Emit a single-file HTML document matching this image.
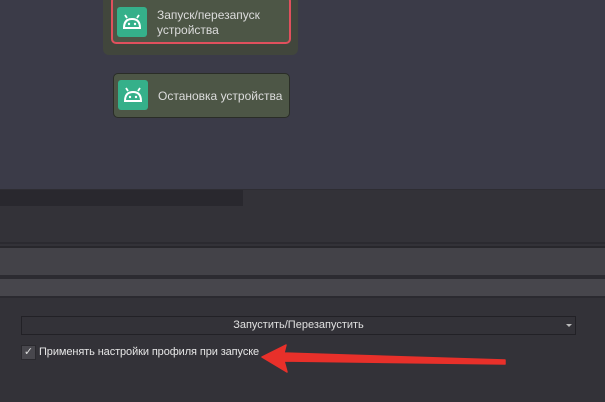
<!DOCTYPE html>
<html><head><meta charset="utf-8"><style>
*{margin:0;padding:0;box-sizing:border-box}
body{width:605px;height:402px;overflow:hidden;background:#333238;font-family:"Liberation Sans",sans-serif;position:relative}
.a{position:absolute}
.btn{position:absolute;background:#4d5646;border-radius:5px;color:#dcdcdc;font-size:12px;line-height:15px}
.ic{position:absolute;width:30px;height:30px;background:#35b08a;border-radius:3px}
</style></head><body>
<div class="a" style="left:0;top:0;width:605px;height:189px;background:#3b3b48"></div>
<div class="a" style="left:103px;top:-6px;width:195px;height:61px;background:#41463c;border-radius:6px"></div>
<div class="btn" style="left:111px;top:-4px;width:180px;height:48px;border:2px solid #e0505d">
 <div class="ic" style="left:4px;top:9px"><svg width="30" height="30" viewBox="0 0 30 30"><path d="M7 21 Q7 12 15 12 Q23 12 23 21 Z" fill="none" stroke="#fff" stroke-width="2"/><path d="M10 11 L8 8 M20 11 L22 8" stroke="#fff" stroke-width="1.8"/><circle cx="12" cy="17" r="1.2" fill="#fff"/><circle cx="18" cy="17" r="1.2" fill="#fff"/></svg></div>
 <div class="a" style="left:44px;top:10px">Запуск/перезапуск<br>устройства</div>
</div>
<div class="btn" style="left:113px;top:73px;width:177px;height:45px;border:1px solid #2a2d27">
 <div class="ic" style="left:4px;top:6px"><svg width="30" height="30" viewBox="0 0 30 30"><path d="M7 21 Q7 12 15 12 Q23 12 23 21 Z" fill="none" stroke="#fff" stroke-width="2"/><path d="M10 11 L8 8 M20 11 L22 8" stroke="#fff" stroke-width="1.8"/><circle cx="12" cy="17" r="1.2" fill="#fff"/><circle cx="18" cy="17" r="1.2" fill="#fff"/></svg></div>
 <div class="a" style="left:44px;top:15px">Остановка устройства</div>
</div>
<div class="a" style="left:0;top:189px;width:605px;height:1px;background:#2e2d33"></div>
<div class="a" style="left:0;top:190px;width:243px;height:16px;background:#29282e"></div>
<div class="a" style="left:0;top:242px;width:605px;height:2px;background:#2b2a30"></div>
<div class="a" style="left:0;top:246px;width:605px;height:2px;background:#28272c"></div>
<div class="a" style="left:0;top:248px;width:605px;height:27px;background:#434248"></div>
<div class="a" style="left:0;top:275px;width:605px;height:4px;background:#2c2b31"></div>
<div class="a" style="left:0;top:279px;width:605px;height:17px;background:#47464c"></div>
<div class="a" style="left:0;top:296px;width:605px;height:2px;background:#2b2a30"></div>
<div class="a" style="left:21px;top:316px;width:555px;height:19px;border:1px solid #222126;background:#333238;color:#e0e0e0;font-size:11px;text-align:center;line-height:17px">Запустить/Перезапустить</div>
<div class="a" style="left:566px;top:324px;width:0;height:0;border-left:3px solid transparent;border-right:3px solid transparent;border-top:3px solid #bbb"></div>
<div class="a" style="left:21px;top:345px;width:15px;height:15px;background:#48474d;border:1px solid #2a292e;color:#ddd;font-size:11px;line-height:13px;text-align:center">✓</div>
<div class="a" style="left:39px;top:346px;color:#e6e6e6;font-size:11px;letter-spacing:-0.1px">Применять настройки профиля при запуске</div>
<svg class="a" style="left:0;top:0" width="605" height="402"><path d="M505 360 L505 364 L284 361 L287 372 L262 357 L286 345 L284 353 Z" fill="#e8302a" stroke="#e8302a" stroke-width="1.5" stroke-linejoin="round"/></svg>
</body></html>
